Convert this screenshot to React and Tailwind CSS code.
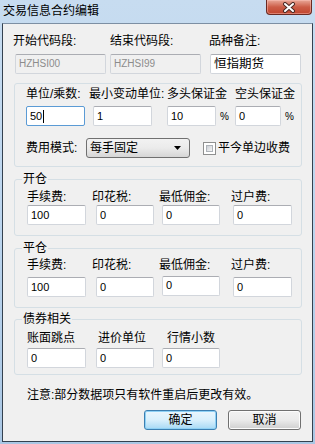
import clsx from 'clsx'

const Box = ({ value, className, focused, disabled, top, big }) => (
  <div
    className={clsx(
      'h-[20px] border rounded-[2px] flex pl-[3px] shrink-0',
      top ? 'items-start pt-[1px]' : 'items-center',
      focused ? 'border-[#5b9bd5] bg-white' : 'border-[#d2d6dc] border-t-[#abadb3]',
      disabled ? 'bg-[#f0f0f0] text-[#8c8c8c] font-[\'Liberation_Mono\',monospace] text-[10px]' : 'bg-white text-black',
      big ? 'text-[12.5px]' : !disabled && 'text-[11px]',
      className
    )}
  >
    <span className="leading-[14px]">{value}</span>
    {focused && <span className="w-px h-[13px] bg-black ml-[1px]" />}
  </div>
)

const Group = ({ title, className, children }) => (
  <div className={clsx('relative ml-[11px] w-[288px] border border-[#d5dfe5] rounded-[3px]', className)}>
    {title && (
      <span className="absolute left-[7px] -top-[9px] bg-[#f0f0f0] px-px leading-[16px]">{title}</span>
    )}
    {children}
  </div>
)

export default function App() {
  return (
    <div className="w-[315px] h-[444px] flex flex-col bg-gradient-to-b from-[#c7dcf0] via-[#bcd5ee] to-[#aac7e4] text-[12px] text-black font-['Liberation_Sans','Noto_Sans_CJK_SC',sans-serif]">
      {/* title bar */}
      <div className="h-[23px] flex justify-between shrink-0">
        <div className="pl-[3px] pt-[3px] leading-[16px] text-[12px]">交易信息合约编辑</div>
        <div className="mr-[3px] w-[46px] h-[15px] rounded-b-[4px] border border-t-0 border-[#6a2a22] bg-gradient-to-b from-[#e8a898] via-[#cc5d47] to-[#c1452e] flex items-center justify-center shadow-[inset_0_0_0_1px_rgba(255,200,190,0.45)]">
          <svg width="14" height="11" viewBox="0 0 14 11">
            <path d="M3 2 L11 9 M11 2 L3 9" stroke="#4a2a25" strokeWidth="4" strokeLinecap="round" />
            <path d="M3 2 L11 9 M11 2 L3 9" stroke="#ffffff" strokeWidth="2" strokeLinecap="round" />
          </svg>
        </div>
      </div>

      {/* client area */}
      <div className="ml-[2px] w-[311px] h-[419px] bg-[#f0f0f0] border border-[#34414f] border-t-[#7d8fa3] flex flex-col">
        {/* row 1 */}
        <div className="flex mt-[9px] ml-[10px]">
          <div className="w-[97px] flex flex-col">
            <span className="leading-[16px]">开始代码段:</span>
            <Box value="HZHSI00" disabled className="mt-[5px] ml-[2px] w-[91px]" />
          </div>
          <div className="w-[99px] flex flex-col">
            <span className="leading-[16px]">结束代码段:</span>
            <Box value="HZHSI99" disabled className="mt-[5px] w-[91px]" />
          </div>
          <div className="flex flex-col">
            <span className="leading-[16px]">品种备注:</span>
            <Box value="恒指期货" big className="mt-[5px] ml-px w-[91px]" />
          </div>
        </div>

        {/* group 1 */}
        <Group className="mt-[9px] h-[84px]">
          <div className="flex pt-[2px] ml-[11px]">
            <div className="w-[63px] flex flex-col">
              <span className="leading-[16px]">单位/乘数:</span>
              <Box value="50" focused className="mt-[4px] w-[59px]" />
            </div>
            <div className="w-[78px] flex flex-col">
              <span className="leading-[16px] whitespace-nowrap">最小变动单位:</span>
              <Box value="1" className="mt-[4px] ml-[4px] w-[59px]" />
            </div>
            <div className="w-[68px] flex flex-col">
              <span className="leading-[16px] whitespace-nowrap">多头保证金</span>
              <div className="mt-[4px] flex items-center">
                <Box value="10" className="w-[49px]" />
                <span className="ml-[4px] text-[10px]">%</span>
              </div>
            </div>
            <div className="flex flex-col">
              <span className="leading-[16px] whitespace-nowrap">空头保证金</span>
              <div className="mt-[4px] flex items-center">
                <Box value="0" className="w-[46px]" />
                <span className="ml-[4px] text-[10px]">%</span>
              </div>
            </div>
          </div>
          <div className="flex items-center mt-[12px] ml-[11px] h-[20px]">
            <span className="w-[60px] leading-[16px]">费用模式:</span>
            <div className="w-[104px] h-[20px] border border-[#707070] rounded-[3px] bg-gradient-to-b from-[#f2f2f2] via-[#ebebeb] to-[#d6d6d6] flex items-center pl-[3px] pr-[8px] justify-between">
              <span className="leading-[16px]">每手固定</span>
              <svg width="7" height="4" viewBox="0 0 7 4">
                <path d="M0 0 H7 L3.5 4 Z" fill="#000" />
              </svg>
            </div>
            <div className="ml-[13px] w-[13px] h-[13px] border border-[#8e8f8f] bg-white p-[2px]">
              <div className="w-full h-full bg-gradient-to-br from-[#cbcfd5] to-[#f6f6f6] border border-[#aeb3b9]" />
            </div>
            <span className="ml-[2px] leading-[16px]">平今单边收费</span>
          </div>
        </Group>

        {/* 开仓 */}
        <Group title="开仓" className="mt-[12px] h-[57px]">
          <div className="flex pt-[9px] ml-[12px]">
            <div className="w-[65px] flex flex-col">
              <span className="leading-[16px]">手续费:</span>
              <Box value="100" className="w-[59px]" />
            </div>
            <div className="w-[67px] flex flex-col">
              <span className="leading-[16px]">印花税:</span>
              <Box value="0" className="ml-[4px] w-[58px]" />
            </div>
            <div className="w-[72px] flex flex-col">
              <span className="leading-[16px]">最低佣金:</span>
              <Box value="0" className="ml-[3px] w-[58px]" />
            </div>
            <div className="flex flex-col">
              <span className="leading-[16px]">过户费:</span>
              <Box value="0" className="ml-[2px] w-[59px]" />
            </div>
          </div>
        </Group>

        {/* 平仓 */}
        <Group title="平仓" className="mt-[12px] h-[60px]">
          <div className="flex pt-[8px] ml-[12px]">
            <div className="w-[65px] flex flex-col">
              <span className="leading-[16px]">手续费:</span>
              <Box value="100" className="mt-[4px] w-[59px]" />
            </div>
            <div className="w-[67px] flex flex-col">
              <span className="leading-[16px]">印花税:</span>
              <Box value="0" className="mt-[4px] ml-[4px] w-[58px]" />
            </div>
            <div className="w-[72px] flex flex-col">
              <span className="leading-[16px]">最低佣金:</span>
              <Box value="0" top className="mt-[3px] ml-[3px] w-[58px]" />
            </div>
            <div className="flex flex-col">
              <span className="leading-[16px]">过户费:</span>
              <Box value="0" className="mt-[4px] ml-[2px] w-[59px]" />
            </div>
          </div>
        </Group>

        {/* 债券相关 */}
        <Group title="债券相关" className="mt-[11px] h-[56px]">
          <div className="flex pt-[10px] ml-[12px]">
            <div className="w-[69px] flex flex-col">
              <span className="leading-[16px]">账面跳点</span>
              <Box value="0" className="mt-[2px] w-[59px]" />
            </div>
            <div className="w-[66px] flex flex-col">
              <span className="leading-[16px] ml-[2px]">进价单位</span>
              <Box value="0" className="mt-[2px] w-[58px]" />
            </div>
            <div className="flex flex-col">
              <span className="leading-[16px] ml-[5px]">行情小数</span>
              <Box value="0" className="mt-[2px] w-[58px]" />
            </div>
          </div>
        </Group>

        <p className="mt-[12px] ml-[24px] leading-[16px]">注意:部分数据项只有软件重启后更改有效。</p>

        <div className="flex mt-[7px] ml-[141px] gap-[11px]">
          <button className="w-[73px] h-[20px] rounded-[3px] border border-[#3c7fb1] bg-gradient-to-b from-[#eaf6fd] via-[#d9f0fc] to-[#a7d9f5] shadow-[inset_0_0_0_1px_#8fd1f5] leading-[16px]">
            确定
          </button>
          <button className="w-[73px] h-[20px] rounded-[3px] border border-[#707070] bg-gradient-to-b from-[#f2f2f2] via-[#ebebeb] to-[#cfcfcf] shadow-[inset_0_0_0_1px_#fcfcfc] leading-[16px]">
            取消
          </button>
        </div>
      </div>
    </div>
  )
}
